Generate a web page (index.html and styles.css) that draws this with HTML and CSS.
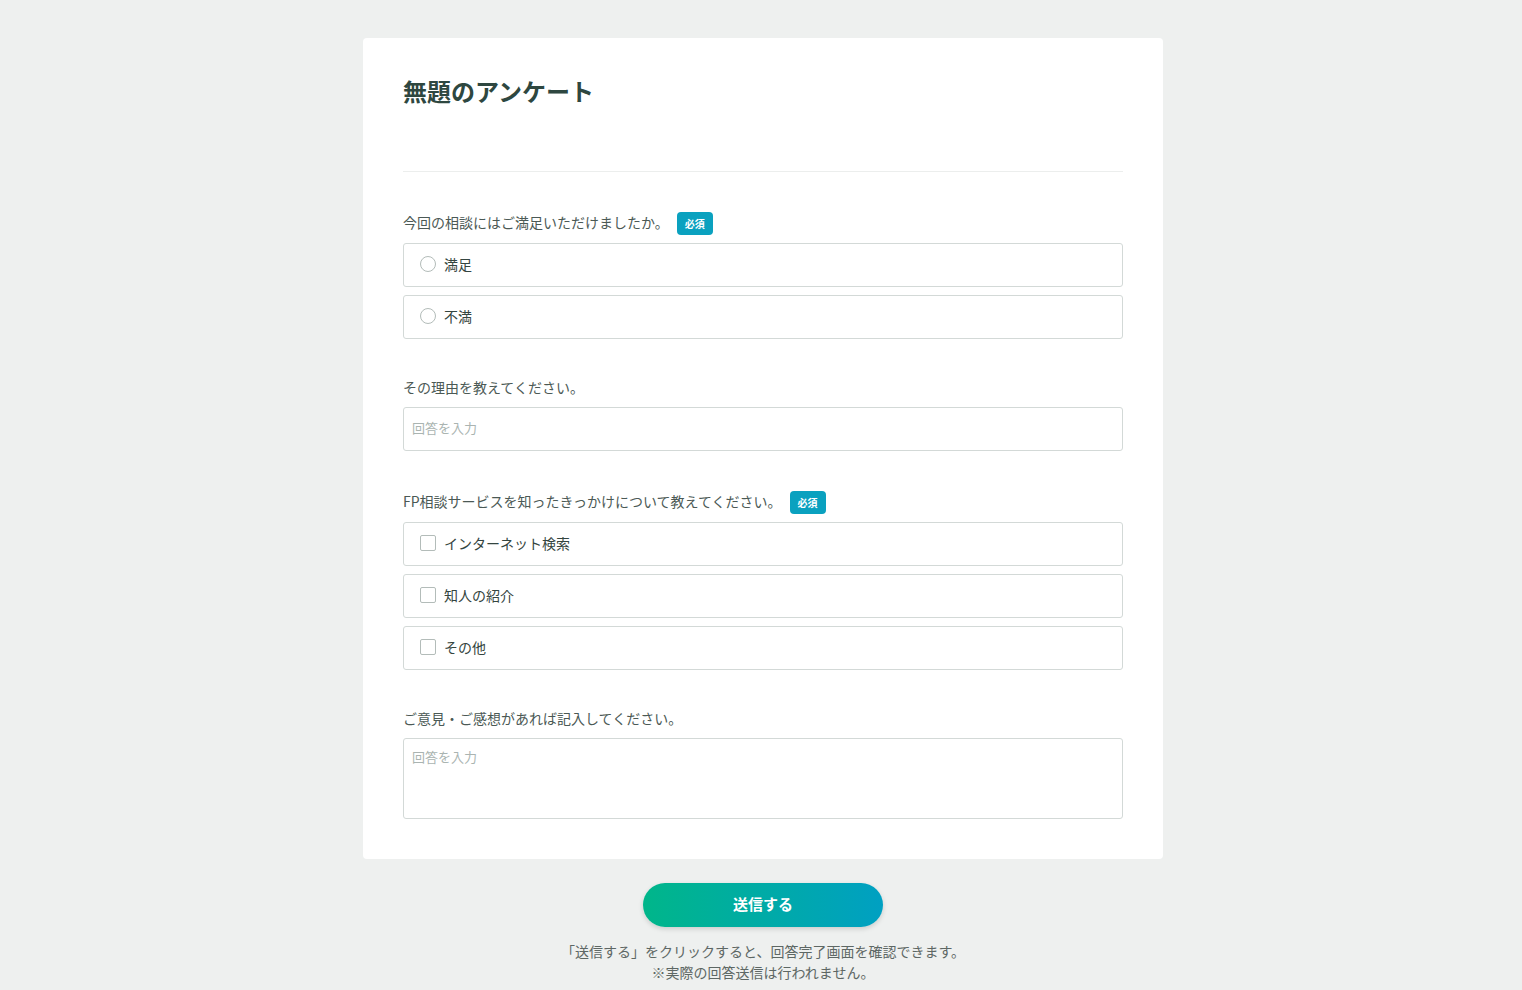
FILE: index.html
```html
<!DOCTYPE html>
<html lang="ja">
<head>
    <meta charset="UTF-8">
    <title>無題のアンケート</title>
    <link rel="stylesheet" href="styles.css">
</head>
<body>
    <div class="wrap">
        <div class="card">
            <h1 class="title">無題のアンケート</h1>

            <!--質問1-->
            <div class="question">
                <div class="label">今回の相談にはご満足いただけましたか。<span class="badge">必須</span></div>
                <ul class="options">
                    <li><span class="radio"></span>満足</li>
                    <li><span class="radio"></span>不満</li>
                </ul>
            </div>

            <!--質問2-->
            <div class="question">
                <div class="label">その理由を教えてください。</div>
                <input class="text" type="text" placeholder="回答を入力">
            </div>

            <!--質問3-->
            <div class="question">
                <div class="label">FP相談サービスを知ったきっかけについて教えてください。<span class="badge">必須</span></div>
                <ul class="options">
                    <li><span class="check"></span>インターネット検索</li>
                    <li><span class="check"></span>知人の紹介</li>
                    <li><span class="check"></span>その他</li>
                </ul>
            </div>

            <!--質問4-->
            <div class="question">
                <div class="label">ご意見・ご感想があれば記入してください。</div>
                <textarea class="area" placeholder="回答を入力"></textarea>
            </div>
        </div>

        <div class="submit">
            <button class="btn" type="button">送信する</button>
            <p class="note">「送信する」をクリックすると、回答完了画面を確認できます。<br>※実際の回答送信は行われません。</p>
        </div>
    </div>
</body>
</html>
```

FILE: styles.css
```css
*{
    margin: 0;
    padding: 0;
    box-sizing: border-box;
}
ul{
    list-style: none;
}
body{
    background-color: #eef0ef;
    font-family: "Noto Sans CJK JP", "Noto Sans", sans-serif;
    color: #4b5955;
    padding-left: 4px;
}
.wrap{
    width: 800px;
    margin: 0 auto;
    padding-top: 38px;
}
.card{
    background-color: #fff;
    border-radius: 4px;
    padding: 40px;
}
.title{
    font-size: 24px;
    line-height: 26px;
    font-weight: bold;
    color: #2e4740;
    padding-bottom: 67px;
    border-bottom: 1px solid #eceeed;
}
.question{
    margin-top: 40px;
}
.label{
    display: flex;
    align-items: center;
    font-size: 14px;
    line-height: 16px;
    padding-bottom: 4px;
    margin-bottom: 8px;
}
.badge{
    display: inline-block;
    margin-left: 8px;
    margin-bottom: -4px;
    width: 36px;
    height: 23px;
    line-height: 23px;
    border-radius: 4px;
    background-color: #0aa1bf;
    color: #fff;
    font-size: 10px;
    font-weight: bold;
    text-align: center;
}
.options li{
    display: flex;
    align-items: center;
    height: 44px;
    padding-left: 16px;
    padding-bottom: 2px;
    border: 1px solid #d3d9d7;
    border-radius: 3px;
    font-size: 14px;
    color: #344540;
    margin-bottom: 8px;
}
.options li:last-child{
    margin-bottom: 0;
}
.radio{
    width: 16px;
    height: 16px;
    border: 1px solid #b3bcb9;
    border-radius: 50%;
    margin-right: 8px;
}
.check{
    width: 16px;
    height: 16px;
    border: 1px solid #b3bcb9;
    border-radius: 2px;
    margin-right: 8px;
}
.text, .area{
    display: block;
    width: 100%;
    border: 1px solid #d3d9d7;
    border-radius: 3px;
    font-family: inherit;
    font-size: 13px;
    color: #344540;
    padding: 0 8px;
    outline: none;
}
.text{
    height: 44px;
    padding-bottom: 3px;
}
.area{
    height: 81px;
    padding-top: 8px;
    resize: none;
}
.text::placeholder, .area::placeholder{
    color: #aab4b1;
}
.submit{
    text-align: center;
    padding-top: 24px;
}
.btn{
    width: 240px;
    height: 44px;
    padding-bottom: 4px;
    border: none;
    border-radius: 22px;
    background: linear-gradient(90deg, #00b68a, #00a0c2);
    box-shadow: 0 2px 5px rgba(0, 0, 0, 0.15);
    color: #fff;
    font-family: inherit;
    font-size: 15px;
    font-weight: bold;
    cursor: pointer;
}
.note{
    margin-top: 14px;
    font-size: 14px;
    line-height: 21px;
    color: #5d6764;
}
```
